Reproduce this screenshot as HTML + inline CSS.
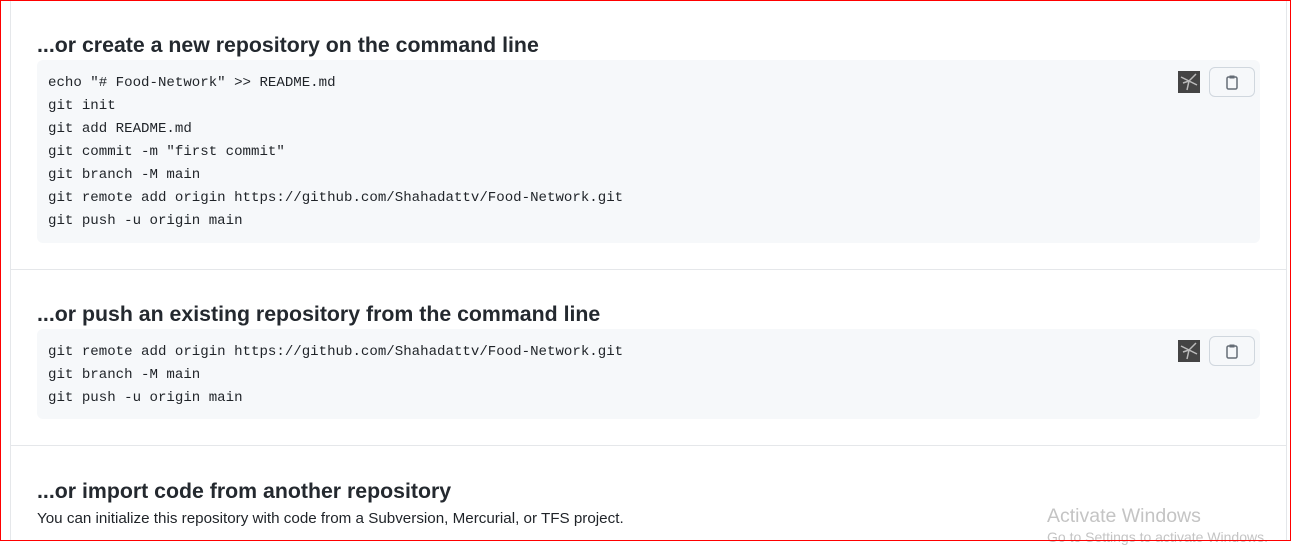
<!DOCTYPE html>
<html><head><style>
body{margin:0;width:1291px;height:541px;overflow:hidden;background:#fff;font-family:"Liberation Sans",sans-serif;position:relative}
.frame{position:absolute;left:0;top:0;width:1289px;height:539px;border:1px solid #f00}
.vl{position:absolute;top:1px;bottom:0;width:1px;background:#e5e7ea}
.hr{position:absolute;left:10px;right:4px;height:1px;background:#e5e7ea}
h3{position:absolute;left:37px;margin:0;font-size:21.3px;font-weight:600;color:#24292f;letter-spacing:0px}
.code{position:absolute;left:37px;width:1223px;background:#f6f8fa;border-radius:6px}
pre{margin:0;padding:12px 11px;font-family:"Liberation Mono",monospace;font-size:14.1px;line-height:23px;color:#1f2328}
.ic{position:absolute;left:1178px;width:22px;height:22px;background:#444}
.btn{position:absolute;left:1209px;width:46px;height:30px;border:1px solid #d0d7de;border-radius:6px;background:#f6f8fa;box-sizing:border-box}
p{position:absolute;left:37px;margin:0;font-size:15.2px;color:#1f2328}
.aw{position:absolute;left:1047px;top:505px;font-size:19.5px;color:#c4c4c4}
.aw2{position:absolute;left:1047px;top:529px;font-size:14px;color:#c4c4c4}
</style></head><body>
<div class="vl" style="left:10px"></div><div class="vl" style="left:1286px"></div>
<h3 style="top:33px">...or create a new repository on the command line</h3>
<div class="code" style="top:60px;height:183px"><pre>echo "# Food-Network" &gt;&gt; README.md
git init
git add README.md
git commit -m "first commit"
git branch -M main
git remote add origin https://github.com/Shahadattv/Food-Network.git
git push -u origin main</pre></div>
<div class="ic" style="top:71px"><svg width="22" height="22"><path d="M3 6L11 10L18 3M11 10L9 19M11 10L19 14M11 10L5 12" stroke="#bbb" stroke-width="1.5" fill="none"/></svg></div>
<div class="btn" style="top:67px"><svg width="44" height="29"><rect x="17" y="9" width="10" height="12" rx="1.5" fill="none" stroke="#656d76" stroke-width="1.5"/><rect x="19.5" y="7.5" width="5" height="3" fill="#656d76"/></svg></div>
<div class="hr" style="top:269px"></div>
<h3 style="top:302px">...or push an existing repository from the command line</h3>
<div class="code" style="top:329px;height:90px"><pre>git remote add origin https://github.com/Shahadattv/Food-Network.git
git branch -M main
git push -u origin main</pre></div>
<div class="ic" style="top:340px"><svg width="22" height="22"><path d="M3 6L11 10L18 3M11 10L9 19M11 10L19 14M11 10L5 12" stroke="#bbb" stroke-width="1.5" fill="none"/></svg></div>
<div class="btn" style="top:336px"><svg width="44" height="29"><rect x="17" y="9" width="10" height="12" rx="1.5" fill="none" stroke="#656d76" stroke-width="1.5"/><rect x="19.5" y="7.5" width="5" height="3" fill="#656d76"/></svg></div>
<div class="hr" style="top:445px"></div>
<h3 style="top:479px">...or import code from another repository</h3>
<p style="top:510px">You can initialize this repository with code from a Subversion, Mercurial, or TFS project.</p>
<div class="aw">Activate Windows</div>
<div class="aw2">Go to Settings to activate Windows.</div>
<div class="frame"></div>
</body></html>
